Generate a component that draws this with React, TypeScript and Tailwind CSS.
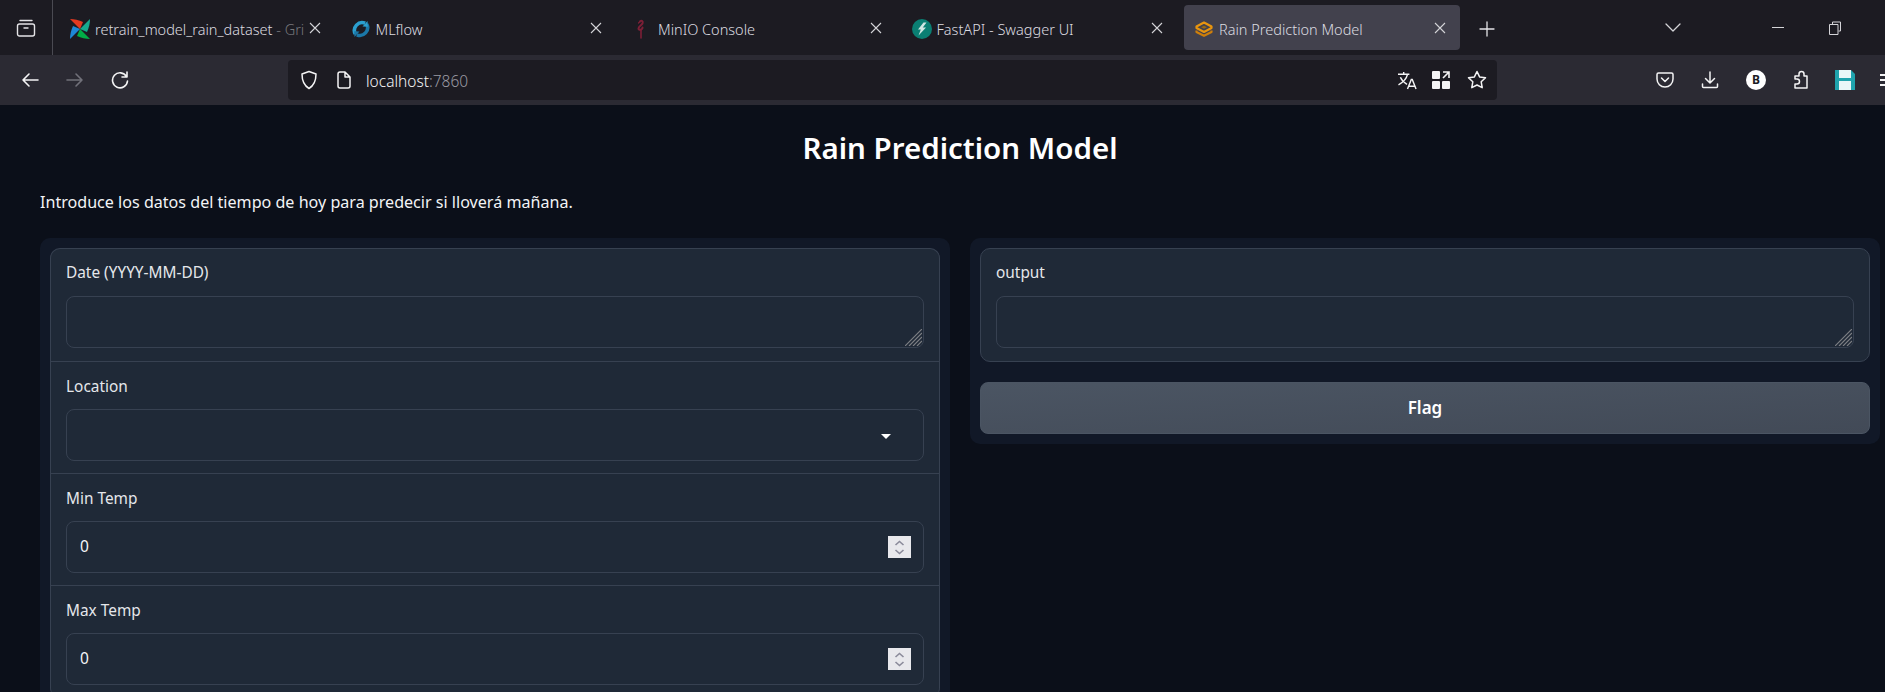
import React from "react";

const s = { fill: "none", stroke: "currentColor", strokeLinecap: "round", strokeLinejoin: "round" } as const;

function Close() {
  return (
    <svg viewBox="0 0 12 12" className="w-[12px] h-[12px] text-[#d4d4d8] shrink-0" fill="none" stroke="currentColor" strokeWidth={1.1}>
      <path d="M1 1l10 10M11 1L1 11" />
    </svg>
  );
}

function Airflow() {
  return (
    <svg viewBox="0 0 20 20" className="w-[20px] h-[20px] shrink-0">
      <path d="M0 0L10 10 13 3C9 1 4 0 0 0z" fill="#e43921" />
      <path d="M20 0L10 10 17 13C19 9 20 4 20 0z" fill="#17a98f" />
      <path d="M20 20L10 10 7 17C11 19 16 20 20 20z" fill="#00ad46" />
      <path d="M0 20L10 10 3 7C1 11 0 16 0 20z" fill="#1e88d8" />
    </svg>
  );
}

function Mlflow() {
  return (
    <svg viewBox="0 0 20 20" className="w-[20px] h-[20px] shrink-0" fill="none" strokeWidth={3.6}>
      <path d="M14.200 4.200A7.800 7.800 0 0 0 4.300 15" stroke="#2b9fcf" />
      <path d="M5.800 15.800A7.800 7.800 0 0 0 15.700 5" stroke="#1b78a8" />
      <path d="M11.500 7.500L16.800 7.800 16.500 2z" fill="#2b9fcf" />
      <path d="M8.500 12.500L3.200 12.200 3.500 18z" fill="#1b78a8" />
    </svg>
  );
}

function Minio() {
  return (
    <svg viewBox="0 0 12 20" className="w-[12px] h-[20px] shrink-0" fill="none" stroke="#7d1f36" strokeWidth={2} strokeLinecap="round">
      <path d="M5 2.500C6.500 1 8.500 2 7.500 4.500 6.500 6.500 3.500 7 3.500 9.500 3.500 11.500 7.500 11 7.500 8.500" />
      <path d="M6 11v8" strokeWidth={1.6} />
      <path d="M5 2.500L3.500 4" strokeWidth={1.2} />
    </svg>
  );
}

function Fastapi() {
  return (
    <svg viewBox="0 0 20 20" className="w-[20px] h-[20px] shrink-0">
      <circle cx="10" cy="10" r="10" fill="#0a7f73" />
      <path d="M11.500 3.500H14.500L10.800 8.500H14L6.500 16.500 8.800 10.500H6z" fill="#cfe7e3" />
    </svg>
  );
}

function Gradio() {
  return (
    <svg viewBox="0 0 18 16" className="w-[18px] h-[16px] shrink-0" fill="none" stroke="#e8950e" strokeWidth={2.2} strokeLinejoin="round">
      <path d="M9 1.500L16.500 5.500V7L9 11 1.500 7V5.500z" />
      <path d="M1.500 9.500V11L9 14.800 16.500 11V9.500" stroke="#cf7f0a" />
      <path d="M6 6.200L9 4.700 12 6.200 9 7.700z" fill="#9a6a10" stroke="none" />
    </svg>
  );
}

function Tab({ icon, iconClass, title, fadeText, active }: { icon: React.ReactNode; iconClass: string; title: string; fadeText?: string; active?: boolean }) {
  return (
    <div className={`flex items-center h-[45px] w-[276px] mr-[4.500px] pl-[8px] rounded-[4px] ${active ? "bg-[#42414d] pr-[14px]" : "pr-[17px]"}`}>
      <div className={`flex items-center justify-start shrink-0 mt-[3px] ${iconClass}`}>{icon}</div>
      <div className="flex-1 min-w-0 whitespace-nowrap text-[14.500px] leading-[20px] font-light text-[#dcdce0] mt-[3px]">
        {title}
        {fadeText ? <span className="text-[#77777c]">{fadeText}</span> : null}
      </div>
      <div className="mt-[1px]"><Close /></div>
    </div>
  );
}

function Resize() {
  return (
    <svg viewBox="0 0 17 17" className="absolute right-[1px] bottom-[1px] w-[17px] h-[17px] text-[#7d7f84]" fill="none" stroke="currentColor" strokeWidth={1.2}>
      <path d="M0 17L17 0M4 17L17 4M8 17l9-9M12 17l5-5" />
    </svg>
  );
}

const firstLabelCls = "h-[20px] mb-[13px] text-[15.400px] leading-[20px] text-[#e5e7eb]";
const labelCls = "h-[20px] mb-[12px] text-[15.400px] leading-[20px] text-[#e5e7eb]";
const firstFieldCls = "px-[15px] pt-[14px] pb-[13px] border-b border-[#374151]";
const fieldCls = "px-[15px] pt-[15px] pb-[12px] border-b border-[#374151]";

function NumberField({ label }: { label: string }) {
  return (
    <div className={fieldCls}>
      <div className={labelCls}>{label}</div>
      <div className="flex items-center justify-between h-[52px] pl-[13px] pr-[12px] rounded-[8px] border border-[#374151] bg-[#1f2937] text-[15.500px] text-[#f3f4f6]">
        <span>0</span>
        <div className="w-[23px] h-[22px] bg-[#e8e8ec] flex items-center justify-center">
          <svg viewBox="0 0 11 15" className="w-[11px] h-[15px]" fill="none" stroke="#8a8a9a" strokeWidth={1.6}>
            <path d="M1.500 5L5.500 1.500 9.500 5M1.500 10l4 3.500 4-3.500" />
          </svg>
        </div>
      </div>
    </div>
  );
}

export default function App() {
  return (
    <div className="h-[692px] w-full overflow-hidden bg-[#0b0f19] font-['Noto_Sans',sans-serif]">
      {/* tab strip */}
      <div className="flex items-center h-[55px] bg-[#1c1b22]">
        <div className="flex items-center justify-center w-[53px] h-full border-r border-[#4a4a52] shrink-0">
          <svg viewBox="0 0 20 20" className="w-[20px] h-[20px] text-[#e4e4e7]" {...s} strokeWidth={1.4}>
            <rect x="1.500" y="6" width="17" height="12" rx="2" />
            <path d="M4 2.500h12M8 10h4" />
          </svg>
        </div>
        <div className="flex items-center pl-[9px]">
          <Tab icon={<Airflow />} iconClass="w-[25px]" title="retrain_model_rain_dataset" fadeText=" - Gri" />
          <Tab icon={<Mlflow />} iconClass="w-[25px]" title="MLflow" />
          <Tab icon={<Minio />} iconClass="w-[27px] pl-[4px]" title="MinIO Console" />
          <Tab icon={<Fastapi />} iconClass="w-[25px]" title="FastAPI - Swagger UI" />
          <Tab icon={<Gradio />} iconClass="w-[27px] pl-[3px]" title="Rain Prediction Model" active />
        </div>
        <svg viewBox="0 0 16 16" className="w-[16px] h-[16px] ml-[14px] mt-[3px] text-[#e4e4e7]" {...s} strokeWidth={1.3}>
          <path d="M8 1v14M1 8h14" />
        </svg>
        <svg viewBox="0 0 16 10" className="w-[16px] h-[10px] ml-[170px] text-[#d4d4d8]" {...s} strokeWidth={1.3}>
          <path d="M1 1l7 7 7-7" />
        </svg>
        <div className="w-[12px] h-px bg-[#d4d4d8] ml-[91px]" />
        <svg viewBox="0 0 12 14" className="w-[12px] h-[14px] ml-[45px] text-[#d4d4d8]" fill="none" stroke="currentColor">
          <path d="M3.500 3V1h8v9H9.500M.5 3.500h8.500v10H.5z" />
        </svg>
      </div>

      {/* toolbar */}
      <div className="flex items-center h-[50px] bg-[#2b2a33] pl-[21px]">
        <svg viewBox="0 0 18 16" className="w-[18px] h-[16px] text-[#f4f4f5] shrink-0" {...s} strokeWidth={1.6}>
          <path d="M17 8H2M8 2L2 8l6 6" />
        </svg>
        <svg viewBox="0 0 18 16" className="w-[18px] h-[16px] ml-[27px] text-[#71717a] shrink-0" {...s} strokeWidth={1.6}>
          <path d="M1 8h15M10 2l6 6-6 6" />
        </svg>
        <svg viewBox="0 0 18 18" className="w-[18px] h-[18px] ml-[27px] text-[#f4f4f5] shrink-0" {...s} strokeWidth={1.6}>
          <path d="M15.500 5.500A7.500 7.500 0 1 0 16.500 10M16 1v5h-5" />
        </svg>
        {/* address bar */}
        <div className="flex items-center w-[1209px] h-[40px] ml-[159px] rounded-[4px] bg-[#1c1b22] pl-[12px] shrink-0">
          <svg viewBox="0 0 18 20" className="w-[18px] h-[20px] text-[#f4f4f5]" {...s} strokeWidth={1.5}>
            <path d="M9 1.500l7 2.500c0 7-2 11.500-7 14.500C4 15.500 2 11 2 4z" />
          </svg>
          <svg viewBox="0 0 14 18" className="w-[14px] h-[18px] ml-[19px] text-[#f4f4f5]" {...s} strokeWidth={1.5}>
            <path d="M1 3a2 2 0 0 1 2-2h5l5 5v9a2 2 0 0 1-2 2H3a2 2 0 0 1-2-2zM8 1v5h5" />
          </svg>
          <div className="ml-[15px] mt-[2px] text-[15.500px] leading-[20px] font-light text-[#f4f4f5]">
            localhost<span className="text-[#9a9aa2]">:7860</span>
          </div>
          <div className="flex-1" />
          <svg viewBox="0 0 22 20" className="w-[21px] h-[19px] text-[#f4f4f5]" fill="none" stroke="currentColor" strokeWidth={1.5}>
            <path d="M1 3.500h12M7 1v2.500M11 3.500C10 8 6 12 1.500 14.500M3.500 6.500C5 10 8 12.500 10.500 14" />
            <path d="M11 19l4-10h1l4 10M12.500 16h6" />
          </svg>
          <svg viewBox="0 0 18 18" className="w-[18px] h-[18px] ml-[14px] text-[#f4f4f5]" fill="currentColor">
            <rect x="0" y="0" width="8" height="8" rx="1" />
            <rect x="0" y="10" width="8" height="8" rx="1" />
            <rect x="10" y="10" width="8" height="8" rx="1" />
            <path d="M11 1h6v6M17 1l-6 6" fill="none" stroke="currentColor" strokeWidth={1.6} />
          </svg>
          <svg viewBox="0 0 20 20" className="w-[20px] h-[20px] ml-[17px] text-[#f4f4f5]" {...s} strokeWidth={1.5}>
            <path d="M10 1.500l2.600 5.400 5.900.8-4.300 4.100 1 5.900L10 15l-5.200 2.700 1-5.900L1.500 7.700l5.900-.8z" />
          </svg>
          <div className="w-[10px]" />
        </div>
        <svg viewBox="0 0 18 18" className="w-[18px] h-[18px] ml-[159px] text-[#f4f4f5] shrink-0" {...s} strokeWidth={1.5}>
          <path d="M2.500 2h13A1.500 1.500 0 0 1 17 3.500V8a8 8 0 0 1-16 0V3.500A1.500 1.500 0 0 1 2.500 2zM5.500 7L9 10.500 12.500 7" />
        </svg>
        <svg viewBox="0 0 18 18" className="w-[18px] h-[18px] ml-[27px] text-[#f4f4f5] shrink-0" {...s} strokeWidth={1.5}>
          <path d="M9 1v11M4.500 7.500L9 12l4.500-4.500M1.500 13v2.500a1 1 0 0 0 1 1h13a1 1 0 0 0 1-1V13" />
        </svg>
        <div className="w-[20px] h-[20px] ml-[27px] rounded-full bg-white text-[#1c1b22] text-[12px] font-bold leading-none flex items-center justify-center shrink-0">
          B
        </div>
        <svg viewBox="0 0 18 20" className="w-[18px] h-[20px] ml-[26px] text-[#f4f4f5] shrink-0" {...s} strokeWidth={1.5}>
          <path d="M3 6h4V4a2.500 2.500 0 0 1 5 0v2h3v12H3v-4h2a2.500 2.500 0 0 0 0-5H3z" />
        </svg>
        <svg viewBox="0 0 20 20" className="w-[20px] h-[20px] ml-[25px] shrink-0">
          <path d="M0 0h16l4 4v16H0z" fill="#1fa3ad" />
          <rect x="4" y="0" width="12" height="8" fill="#e9f7f8" />
          <rect x="4" y="11" width="12" height="9" fill="#e9f7f8" />
        </svg>
        <div className="ml-[25px] w-[16px] h-[12px] shrink-0 flex flex-col justify-between">
          <div className="h-[2px] bg-[#f4f4f5]" />
          <div className="h-[2px] bg-[#f4f4f5]" />
          <div className="h-[2px] bg-[#f4f4f5]" />
        </div>
      </div>

      {/* page */}
      <div className="pl-[40px] pr-[5px]">
        <h1 className="mt-[23px] h-[40px] text-center text-[29.500px] leading-[40px] font-semibold text-white">Rain Prediction Model</h1>
        <p className="mt-[23px] h-[22px] text-[16.100px] leading-[22px] text-[#f3f4f6]">Introduce los datos del tiempo de hoy para predecir si lloverá mañana.</p>
        <div className="mt-[25px] grid grid-cols-2 gap-[20px] items-start">
          <div className="rounded-[10px] bg-[#111827] p-[10px]">
            <div className="rounded-[10px] border border-[#374151] bg-[#1f2937] border-b-0">
              <div className={firstFieldCls}>
                <div className={firstLabelCls}>Date (YYYY-MM-DD)</div>
                <div className="relative h-[52px] rounded-[8px] border border-[#374151] bg-[#1f2937]">
                  <Resize />
                </div>
              </div>
              <div className={fieldCls}>
                <div className={labelCls}>Location</div>
                <div className="relative h-[52px] rounded-[8px] border border-[#374151] bg-[#1f2937]">
                  <div className="absolute right-[32px] top-[24px] w-0 h-0 border-l-[5px] border-r-[5px] border-t-[5px] border-l-transparent border-r-transparent border-t-white" />
                </div>
              </div>
              <NumberField label="Min Temp" />
              <NumberField label="Max Temp" />
            </div>
          </div>
          <div className="rounded-[10px] bg-[#111827] p-[10px]">
            <div className="rounded-[10px] border border-[#374151] bg-[#1f2937]">
              <div className="px-[15px] pt-[14px] pb-[13px]">
                <div className={firstLabelCls}>output</div>
                <div className="relative h-[52px] rounded-[8px] border border-[#374151] bg-[#1f2937]">
                  <Resize />
                </div>
              </div>
            </div>
            <button className="mt-[20px] w-full h-[52px] rounded-[8px] border border-[#4b5563] bg-gradient-to-br from-[#4b5563] to-[#424a57] text-[17px] font-semibold text-white">
              Flag
            </button>
          </div>
        </div>
      </div>
    </div>
  );
}
